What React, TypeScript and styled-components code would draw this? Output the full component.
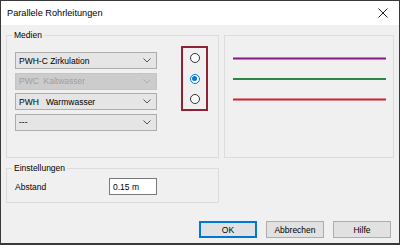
import React from "react";
import styled, {createGlobalStyle} from "styled-components";

const GlobalStyle = createGlobalStyle`
    html, body {
        margin: 0;
        padding: 0;
        background: #ffffff;
    }
    * {
        box-sizing: border-box;
    }
`;

const Window = styled.div`
    width: 400px;
    height: 245px;
    border: 1px solid #3a3a3a;
    border-bottom-width: 2px;
    background: #f0f0f0;
    display: flex;
    flex-direction: column;
    font-family: "Liberation Sans", Arial, sans-serif;
    font-size: 8.5px;
    color: #000;
    overflow: hidden;
`;

const TitleBar = styled.div`
    height: 24px;
    background: #ffffff;
    display: flex;
    align-items: center;
    justify-content: space-between;
    padding: 0 10px 0 6px;
    flex-shrink: 0;
`;

const Title = styled.span`
    font-size: 9.2px;
    color: #000;
`;

const CloseButton = styled.span`
    width: 12px;
    height: 12px;
    display: flex;
    align-items: center;
    justify-content: center;
`;

const Body = styled.div`
    flex: 1;
    display: flex;
    flex-direction: column;
    padding: 10px 5px 0 5px;
`;

const TopRow = styled.div`
    display: flex;
    gap: 5px;
`;

const Group = styled.div<{ $width: number; $height: number; $marginTop?: number }>`
    position: relative;
    width: ${({$width}) => $width}px;
    height: ${({$height}) => $height}px;
    margin-top: ${({$marginTop = 0}) => $marginTop}px;
    border: 1px solid #dcdcdc;
    flex-shrink: 0;
`;

const GroupLabel = styled.span`
    position: absolute;
    top: -6px;
    left: 5px;
    padding: 0 2px;
    background: #f0f0f0;
    line-height: 11px;
    color: #000;
`;

const MedienInner = styled.div`
    display: flex;
    align-items: flex-start;
    padding-left: 8px;
`;

const ComboColumn = styled.div`
    display: flex;
    flex-direction: column;
    gap: 3.5px;
    margin-top: 16px;
`;

const Combo = styled.div<{ $disabled?: boolean }>`
    width: 142px;
    height: 17px;
    border: 1px solid ${({$disabled}) => ($disabled ? "#c4c4c4" : "#adadad")};
    background: ${({$disabled}) => ($disabled ? "#cccccc" : "#e5e5e5")};
    color: ${({$disabled}) => ($disabled ? "#a0a0a0" : "#000")};
    display: flex;
    align-items: center;
    justify-content: space-between;
    padding: 0 5px 0 3px;
    white-space: pre;
`;

const RadioBox = styled.div`
    margin-left: 24px;
    margin-top: 10px;
    width: 27px;
    height: 65px;
    border: 2px solid #8e2435;
    display: flex;
    flex-direction: column;
    align-items: center;
    gap: 10.5px;
    padding-top: 5px;
`;

const Radio = styled.span<{ $checked?: boolean }>`
    width: 10px;
    height: 10px;
    border-radius: 50%;
    border: 1px solid ${({$checked}) => ($checked ? "#0078d7" : "#333333")};
    background: #ffffff;
    display: flex;
    align-items: center;
    justify-content: center;

    &::after {
        content: "";
        width: 5px;
        height: 5px;
        border-radius: 50%;
        background: ${({$checked}) => ($checked ? "#0078d7" : "transparent")};
    }
`;

const Preview = styled.div`
    width: 170px;
    height: 123px;
    border: 1px solid #dcdcdc;
    background: #f0f0f0;
`;

const SettingsInner = styled.div`
    display: flex;
    align-items: center;
    padding: 9px 0 0 8px;
`;

const FieldLabel = styled.span`
    width: 94px;
`;

const TextInput = styled.div`
    width: 48px;
    height: 17px;
    border: 1px solid #7a7a7a;
    background: #ffffff;
    display: flex;
    align-items: center;
    padding-left: 3px;
`;

const ButtonRow = styled.div`
    display: flex;
    justify-content: flex-end;
    gap: 9px;
    margin-top: 18px;
    padding-right: 3px;
`;

const Button = styled.div<{ $default?: boolean }>`
    width: 58px;
    height: 17px;
    border: 1px solid ${({$default}) => ($default ? "#0078d7" : "#adadad")};
    box-shadow: ${({$default}) => ($default ? "inset 0 0 0 1px #0078d7" : "none")};
    background: #e1e1e1;
    display: flex;
    align-items: center;
    justify-content: center;
`;

function Chevron({color}: { color: string }) {
    return (
        <svg width="8" height="5" viewBox="0 0 8 5">
            <path d="M0.5 0.5 L4 4 L7.5 0.5" fill="none" stroke={color} strokeWidth="1"/>
        </svg>
    );
}

const media = [
    {label: "PWH-C Zirkulation", disabled: false},
    {label: "PWC  Kaltwasser", disabled: true},
    {label: "PWH   Warmwasser", disabled: false},
    {label: "---", disabled: false},
];

const lines = ["#86178a", "#2e8540", "#d2232a"];

export default function App(): React.JSX.Element {
    return (
        <>
            <GlobalStyle/>
            <Window>
                <TitleBar>
                    <Title>Parallele Rohrleitungen</Title>
                    <CloseButton>
                        <svg width="10" height="10" viewBox="0 0 10 10">
                            <path d="M0.5 0.5 L9.5 9.5 M9.5 0.5 L0.5 9.5" stroke="#222" strokeWidth="1"/>
                        </svg>
                    </CloseButton>
                </TitleBar>
                <Body>
                    <TopRow>
                        <Group $width={213} $height={123}>
                            <GroupLabel>Medien</GroupLabel>
                            <MedienInner>
                                <ComboColumn>
                                    {media.map((m) => (
                                        <Combo key={m.label} $disabled={m.disabled}>
                                            <span>{m.label}</span>
                                            <Chevron color={m.disabled ? "#b0b0b0" : "#555"}/>
                                        </Combo>
                                    ))}
                                </ComboColumn>
                                <RadioBox>
                                    <Radio/>
                                    <Radio $checked/>
                                    <Radio/>
                                </RadioBox>
                            </MedienInner>
                        </Group>
                        <Preview>
                            <svg width="168" height="121" viewBox="0 0 168 121">
                                {lines.map((c, i) => (
                                    <line key={c} x1="8" x2="161" y1={22.5 + i * 20.5} y2={22.5 + i * 20.5}
                                          stroke={c} strokeWidth="2"/>
                                ))}
                            </svg>
                        </Preview>
                    </TopRow>
                    <Group $width={213} $height={35} $marginTop={10}>
                        <GroupLabel>Einstellungen</GroupLabel>
                        <SettingsInner>
                            <FieldLabel>Abstand</FieldLabel>
                            <TextInput>0.15 m</TextInput>
                        </SettingsInner>
                    </Group>
                    <ButtonRow>
                        <Button $default>OK</Button>
                        <Button>Abbrechen</Button>
                        <Button>Hilfe</Button>
                    </ButtonRow>
                </Body>
            </Window>
        </>
    );
}
